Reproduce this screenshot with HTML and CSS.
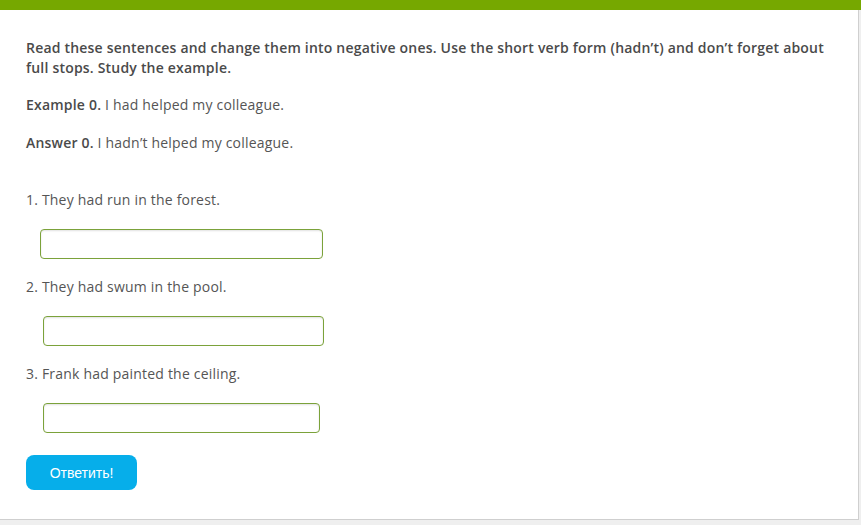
FILE: index.html
```html
<!DOCTYPE html>
<html>
<head>
<meta charset="utf-8">
<link rel="stylesheet" href="styles.css">
</head>
<body>
<div class="topbar"></div>
<div class="card">
  <p class="instr">Read these sentences and change them into negative ones. Use the short verb form (hadn’t) and don’t forget about full stops. Study the example.</p>
  <p class="ex"><b>Example 0.</b> I had helped my colleague.</p>
  <p class="ex ans"><b>Answer 0.</b> I hadn’t helped my colleague.</p>
  <div class="q q1">
    <p>1. They had run in the forest.</p>
    <input class="inp w1" type="text">
  </div>
  <div class="q">
    <p>2. They had swum in the pool.</p>
    <input class="inp w2" type="text">
  </div>
  <div class="q">
    <p>3. Frank had painted the ceiling.</p>
    <input class="inp w3" type="text">
  </div>
  <button class="btn">Ответить!</button>
</div>
</body>
</html>
```
FILE: styles.css
```css
html, body {
  margin: 0;
  padding: 0;
  background: #efefef;
}
body {
  font-family: "Open Sans", sans-serif;
  font-size: 14px;
  line-height: 20px;
  letter-spacing: 0.2px;
  color: #555;
  width: 861px;
  height: 525px;
  overflow: hidden;
}
.topbar {
  height: 10px;
  background: #76a800;
}
.card {
  background: #fff;
  width: 859px;
  height: 510px;
  box-sizing: border-box;
  border-right: 1px solid #cfcfcf;
  border-bottom: 1px solid #cfcfcf;
  padding: 28px 26px 0 26px;
}
p { margin: 0; }
.instr {
  font-weight: 600;
  color: #4a4a4a;
  margin-bottom: 17px;
}
.ex b { font-weight: 600; color: #4a4a4a; }
.ans { margin-top: 18px; }
.q1 { margin-top: 37px; }
.q { display: flex; flex-direction: column; align-items: flex-start; }
.q + .q { margin-top: 18px; }
.inp {
  box-sizing: border-box;
  height: 30px;
  margin-top: 19px;
  border: 1px solid #7ba23a;
  border-radius: 4px;
  box-shadow: inset 0 1px 2px rgba(0,0,0,0.12);
  background: #fff;
  outline: none;
}
.w1 { width: 283px; margin-left: 14px; }
.w2 { width: 281px; margin-left: 17px; }
.w3 { width: 277px; margin-left: 17px; }
.btn {
  display: block;
  margin-top: 22px;
  width: 111px;
  height: 35px;
  border: none;
  border-radius: 8px;
  background: #06aeea;
  color: #fff;
  font-family: "Liberation Sans", Arial, sans-serif;
  font-size: 14px;
  letter-spacing: 0;
  padding: 0;
}
```
